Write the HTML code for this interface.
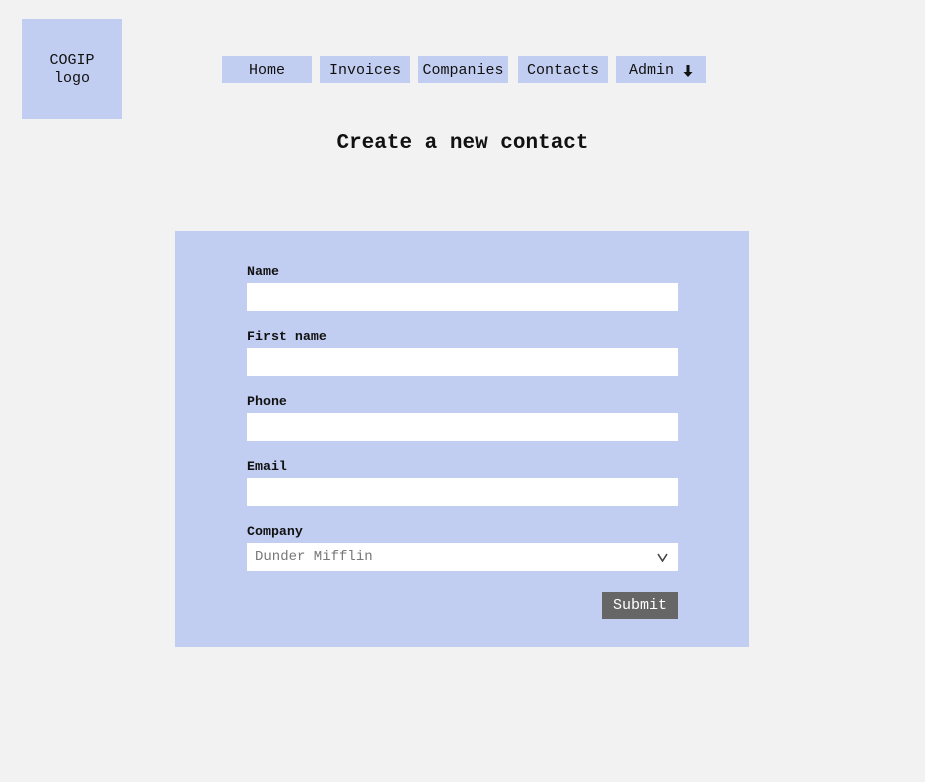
<!DOCTYPE html>
<html><head><style>
*{margin:0;padding:0;box-sizing:border-box}
body{width:925px;height:782px;background:#f2f2f2;font-family:"Liberation Mono","DejaVu Sans Mono",monospace;position:relative;overflow:hidden;color:#111}
.abs{position:absolute}
.logo{left:22px;top:19px;width:100px;height:100px;background:#c2cef1;display:flex;align-items:center;justify-content:center;text-align:center;font-size:15px;line-height:18px;padding-top:2px}
.nav{top:56px;height:27px;width:90px;background:#c2cef1;font-size:15px;display:flex;align-items:center;justify-content:center;padding-top:2px}
h1{position:absolute;left:0;width:925px;top:132px;text-align:center;font-size:21px;font-weight:bold}
.panel{left:175px;top:231px;width:574px;height:416px;background:#c2cef1}
.lbl{left:247px;font-size:13.3px;font-weight:bold}
.inp{left:247px;width:431px;height:28px;background:#fff}
.sub{left:602px;top:592px;width:76px;height:27px;background:#666;color:#fff;font-size:15px;display:flex;align-items:center;justify-content:center}
</style></head><body>
<div class="abs logo">COGIP<br>logo</div>
<div class="abs nav" style="left:222px">Home</div>
<div class="abs nav" style="left:320px">Invoices</div>
<div class="abs nav" style="left:418px">Companies</div>
<div class="abs nav" style="left:518px">Contacts</div>
<div class="abs nav" style="left:616px">Admin&nbsp;<svg width="10" height="14" viewBox="0 0 10 14"><path d="M3.5 1h3v7h3L5 13 0.5 8h3z" fill="#111"/></svg></div>
<h1>Create a new contact</h1>
<div class="abs panel"></div>
<div class="abs lbl" style="top:264px">Name</div>
<div class="abs inp" style="top:283px"></div>
<div class="abs lbl" style="top:329px">First name</div>
<div class="abs inp" style="top:348px"></div>
<div class="abs lbl" style="top:394px">Phone</div>
<div class="abs inp" style="top:413px"></div>
<div class="abs lbl" style="top:459px">Email</div>
<div class="abs inp" style="top:478px"></div>
<div class="abs lbl" style="top:524px">Company</div>
<div class="abs inp" style="top:543px;font-size:14px;color:#777;padding-left:8px;line-height:28px">Dunder Mifflin
<svg class="abs" style="right:10px;top:10px" width="11" height="9" viewBox="0 0 11 9"><path d="M1 1 L5.5 8 L10 1" fill="none" stroke="#444" stroke-width="1.6"/></svg></div>
<div class="abs sub">Submit</div>
</body></html>
